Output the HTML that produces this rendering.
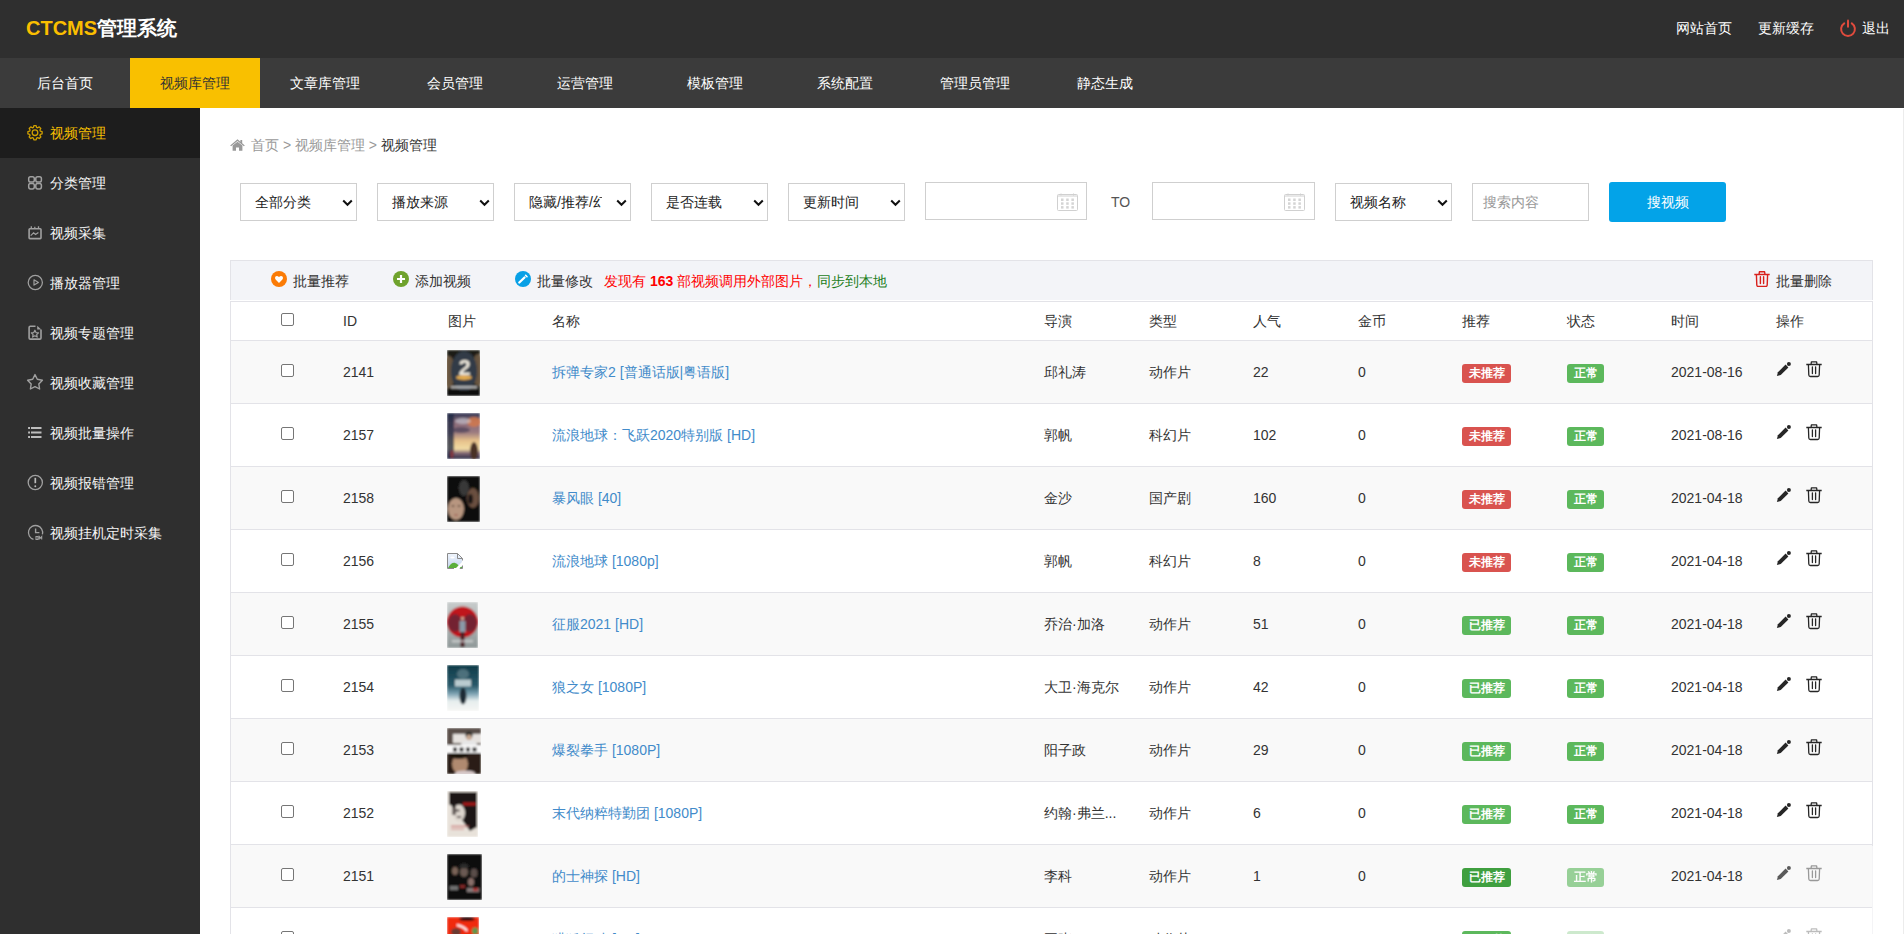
<!DOCTYPE html><html><head><meta charset="utf-8"><style>
*{margin:0;padding:0;box-sizing:border-box}
html,body{width:1904px;height:934px;overflow:hidden;background:#fff;font-family:"Liberation Sans",sans-serif;font-size:14px;color:#333}
.abs{position:absolute}
#hd{position:absolute;left:0;top:0;width:1904px;height:58px;background:#2f2f2f}
#logo{position:absolute;left:26px;top:15px;font-size:20px;font-weight:bold;line-height:26px;color:#fff}
#logo b{color:#fabe00}
.tl{position:absolute;top:19px;line-height:18px;color:#fff;font-size:14px;white-space:nowrap}
#nav{position:absolute;left:0;top:58px;width:1904px;height:50px;background:#3b3b3b}
#nav a{position:absolute;top:0;width:130px;height:50px;line-height:50px;text-align:center;color:#fff;text-decoration:none;font-size:14px}
#nav a.on{background:#f9c000;color:#333}
#side{position:absolute;left:0;top:108px;width:200px;height:826px;background:#2f2f2f}
#side .it{position:absolute;left:0;width:200px;height:50px;line-height:50px;color:#f6f6f6;font-size:14px}
#side .it.on{background:#1d1d1d;color:#f9c000}
#side .it span{position:absolute;left:50px;top:0}
#side .it svg{position:absolute;left:22px;top:12px}
.t{position:absolute;white-space:nowrap;line-height:18px}
.sel{position:absolute;top:183px;width:117px;height:38px;border:1px solid #cfcfcf;background:#fff;color:#222}
.sel span{position:absolute;left:14px;top:9px;line-height:18px}
.sel svg{position:absolute;left:101px;top:15px}
.inp{position:absolute;top:182px;height:38px;border:1px solid #cfcfcf;background:#fff}
#tb{position:absolute;left:230px;top:260px;width:1643px;height:40px;background:#f3f4f8;border-left:1px solid #e3e3e8;border-top:1px solid #e3e3e8;border-right:1px solid #e3e3e8}
.row{position:absolute;left:230px;width:1643px;height:63px;border-left:1px solid #e3e3e8;border-right:1px solid #e3e3e8;border-bottom:1px solid #e3e3e8}
.row .t{top:22px}
.cb{position:absolute;width:13px;height:13px;border:1px solid #767676;border-radius:2px;background:#fff}
.bd{position:absolute;height:19px;line-height:19px;border-radius:3px;color:#fff;font-size:12px;font-weight:bold;text-align:center}
.red{background:#d9534f}.grn{background:#5cb85c}
a.nm{color:#428bca;text-decoration:none}
</style></head><body>
<div id="hd">
<div id="logo"><b>CTCMS</b>管理系统</div>
<div class="tl" style="left:1676px">网站首页</div>
<div class="tl" style="left:1758px">更新缓存</div>
<svg class="abs" style="left:1839px;top:19px" width="18" height="18" viewBox="0 0 18 18"><path d="M5.2 4.3A6.9 6.9 0 1 0 12.8 4.3" fill="none" stroke="#e04b3d" stroke-width="2" stroke-linecap="round"/><path d="M9 1.6v6.2" stroke="#e04b3d" stroke-width="2" stroke-linecap="round"/></svg>
<div class="tl" style="left:1862px">退出</div>
</div>
<div id="nav">
<a style="left:0px">后台首页</a>
<a class="on" style="left:130px">视频库管理</a>
<a style="left:260px">文章库管理</a>
<a style="left:390px">会员管理</a>
<a style="left:520px">运营管理</a>
<a style="left:650px">模板管理</a>
<a style="left:780px">系统配置</a>
<a style="left:910px">管理员管理</a>
<a style="left:1040px">静态生成</a>
</div>
<div id="side">
<div class="it on" style="top:0px"><svg width="30" height="30" viewBox="0 0 30 30"><path d="M11.44 7.32 L11.87 5.59 L14.13 5.59 L14.56 7.32 L15.70 7.79 L17.23 6.88 L18.82 8.47 L17.91 10.00 L18.38 11.14 L20.11 11.57 L20.11 13.83 L18.38 14.26 L17.91 15.40 L18.82 16.93 L17.23 18.52 L15.70 17.61 L14.56 18.08 L14.13 19.81 L11.87 19.81 L11.44 18.08 L10.30 17.61 L8.77 18.52 L7.18 16.93 L8.09 15.40 L7.62 14.26 L5.89 13.83 L5.89 11.57 L7.62 11.14 L8.09 10.00 L7.18 8.47 L8.77 6.88 L10.30 7.79Z" fill="none" stroke="#cf9f00" stroke-width="1.3" stroke-linejoin="round"/><circle cx="13" cy="12.7" r="2.8" fill="none" stroke="#cf9f00" stroke-width="1.3"/></svg><span>视频管理</span></div>
<div class="it" style="top:50px"><svg width="30" height="30" viewBox="0 0 30 30"><rect x="6.7" y="6.7" width="5.6" height="5.3" rx="1.8" fill="none" stroke="#a0a0a0" stroke-width="1.5"/><rect x="13.8" y="6.7" width="5.6" height="5.3" rx="1.8" fill="none" stroke="#a0a0a0" stroke-width="1.5"/><rect x="6.7" y="13.5" width="5.6" height="5.4" rx="1.8" fill="none" stroke="#a0a0a0" stroke-width="1.5"/><rect x="13.8" y="13.5" width="5.6" height="5.4" rx="1.8" fill="none" stroke="#a0a0a0" stroke-width="1.5"/></svg><span>分类管理</span></div>
<div class="it" style="top:100px"><svg width="30" height="30" viewBox="0 0 30 30"><rect x="7.1" y="8.7" width="11.9" height="9.9" rx="0.8" fill="none" stroke="#a0a0a0" stroke-width="1.6"/><path d="M9.3 6.3v2.4M12.8 6.8v1.9M16.5 6.3v2.4" stroke="#a0a0a0" stroke-width="1.3"/><path d="M8.7 15.6L11.6 12.8L13.5 14.5L16.4 12.4" fill="none" stroke="#a0a0a0" stroke-width="1.2"/></svg><span>视频采集</span></div>
<div class="it" style="top:150px"><svg width="30" height="30" viewBox="0 0 30 30"><circle cx="13.3" cy="12.5" r="7.1" fill="none" stroke="#a0a0a0" stroke-width="1.25"/><path d="M12 9.8L16.4 12.5L12 15.1Z" fill="none" stroke="#a0a0a0" stroke-width="1.2" stroke-linejoin="round"/></svg><span>播放器管理</span></div>
<div class="it" style="top:200px"><svg width="30" height="30" viewBox="0 0 30 30"><path d="M13.5 6.3H8.3Q7.1 6.3 7.1 7.5V17.9Q7.1 19.1 8.3 19.1H17.8Q19 19.1 19 17.9V9.5" fill="none" stroke="#a0a0a0" stroke-width="1.6"/><path d="M15.2 5.8L19.2 9.6L15.2 9.6Z" fill="#a0a0a0"/><path d="M12.9 10.2L14 12.6L16.5 12.9L14.7 14.6L15.2 17.1L12.9 15.8L10.6 17.1L11.1 14.6L9.3 12.9L11.8 12.6Z" fill="none" stroke="#a0a0a0" stroke-width="1.2" stroke-linejoin="round"/></svg><span>视频专题管理</span></div>
<div class="it" style="top:250px"><svg width="30" height="30" viewBox="0 0 30 30"><path d="M13 4.6L15.3 9.3L20.4 10.2L16.8 13.9L17.6 19L13 16.6L8.4 19L9.2 13.9L5.6 10.2L10.7 9.3Z" fill="none" stroke="#a0a0a0" stroke-width="1.4" stroke-linejoin="round"/></svg><span>视频收藏管理</span></div>
<div class="it" style="top:300px"><svg width="30" height="30" viewBox="0 0 30 30"><path d="M6.1 8h1.9M6.1 12.5h1.9M6.1 16.9h1.9M9 8h10.5M9 12.5h10.5M9 16.9h10.5" stroke="#bdbdbd" stroke-width="2"/></svg><span>视频批量操作</span></div>
<div class="it" style="top:350px"><svg width="30" height="30" viewBox="0 0 30 30"><circle cx="13.3" cy="12.5" r="7.1" fill="none" stroke="#a0a0a0" stroke-width="1.3"/><path d="M13.3 7.8v5.4" stroke="#bbb" stroke-width="1.7"/><circle cx="13.3" cy="16.2" r="0.95" fill="#bbb"/></svg><span>视频报错管理</span></div>
<div class="it" style="top:400px"><svg width="30" height="30" viewBox="0 0 30 30"><path d="M11.5 19.4A7.1 7.1 0 1 1 20.4 14.4" fill="none" stroke="#a0a0a0" stroke-width="1.3"/><path d="M13.6 8.4V12.6H17.4" fill="none" stroke="#a0a0a0" stroke-width="1.4"/><path d="M14 16.5h2v3h-2zM17.3 19.6v-3l1.2 1.6l1.2-1.6v3" fill="none" stroke="#a0a0a0" stroke-width="1.1"/></svg><span>视频挂机定时采集</span></div>
</div>
<svg class="abs" style="left:230px;top:139px" width="15" height="12" viewBox="0 0 15 12"><path d="M7.5 0.3L0.2 6.4L1.1 7.3L7.5 2L13.9 7.3L14.8 6.4L12.2 4.3V1H10.4V2.8Z" fill="#999"/><path d="M2.6 6.6L7.5 2.7L12.4 6.6V11.8H9V8.4H6V11.8H2.6Z" fill="#999"/></svg>
<div class="t" style="left:251px;top:136px;font-size:14px;color:#999">首页 &gt; 视频库管理 &gt; <span style="color:#333">视频管理</span></div>
<div class="sel" style="left:240px"><span>全部分类</span><svg width="11" height="8" viewBox="0 0 11 8"><path d="M1.2 1.5L5.5 5.8L9.8 1.5" fill="none" stroke="#111" stroke-width="2"/></svg></div>
<div class="sel" style="left:377px"><span>播放来源</span><svg width="11" height="8" viewBox="0 0 11 8"><path d="M1.2 1.5L5.5 5.8L9.8 1.5" fill="none" stroke="#111" stroke-width="2"/></svg></div>
<div class="sel" style="left:514px"><span style="width:73px;overflow:hidden;white-space:nowrap">隐藏/推荐/幻灯</span><svg width="11" height="8" viewBox="0 0 11 8"><path d="M1.2 1.5L5.5 5.8L9.8 1.5" fill="none" stroke="#111" stroke-width="2"/></svg></div>
<div class="sel" style="left:651px"><span>是否连载</span><svg width="11" height="8" viewBox="0 0 11 8"><path d="M1.2 1.5L5.5 5.8L9.8 1.5" fill="none" stroke="#111" stroke-width="2"/></svg></div>
<div class="sel" style="left:788px"><span>更新时间</span><svg width="11" height="8" viewBox="0 0 11 8"><path d="M1.2 1.5L5.5 5.8L9.8 1.5" fill="none" stroke="#111" stroke-width="2"/></svg></div>
<div class="sel" style="left:1335px"><span>视频名称</span><svg width="11" height="8" viewBox="0 0 11 8"><path d="M1.2 1.5L5.5 5.8L9.8 1.5" fill="none" stroke="#111" stroke-width="2"/></svg></div>
<div class="inp" style="left:925px;width:162px"><svg class="abs" style="left:131px;top:10px" width="21" height="18" viewBox="0 0 21 18"><rect x="0.5" y="1.5" width="20" height="16" rx="1" fill="none" stroke="#d0d0d0" stroke-width="1"/><path d="M4 0.5v2M16.5 0.5v2" stroke="#d0d0d0"/><path d="M1 3h19" stroke="#d0d0d0" stroke-width="1"/><g fill="#d4d4d4"><rect x="4" y="5.5" width="2.5" height="2.5"/><rect x="9.2" y="5.5" width="2.5" height="2.5"/><rect x="14.4" y="5.5" width="2.5" height="2.5"/><rect x="4" y="9.3" width="2.5" height="2.5"/><rect x="9.2" y="9.3" width="2.5" height="2.5"/><rect x="14.4" y="9.3" width="2.5" height="2.5"/><rect x="4" y="13.1" width="2.5" height="2.5"/><rect x="9.2" y="13.1" width="2.5" height="2.5"/><rect x="14.4" y="13.1" width="2.5" height="2.5"/></g></svg></div>
<div class="t" style="left:1111px;top:193px;color:#555">TO</div>
<div class="inp" style="left:1152px;width:163px"><svg class="abs" style="left:131px;top:10px" width="21" height="18" viewBox="0 0 21 18"><rect x="0.5" y="1.5" width="20" height="16" rx="1" fill="none" stroke="#d0d0d0" stroke-width="1"/><path d="M4 0.5v2M16.5 0.5v2" stroke="#d0d0d0"/><path d="M1 3h19" stroke="#d0d0d0" stroke-width="1"/><g fill="#d4d4d4"><rect x="4" y="5.5" width="2.5" height="2.5"/><rect x="9.2" y="5.5" width="2.5" height="2.5"/><rect x="14.4" y="5.5" width="2.5" height="2.5"/><rect x="4" y="9.3" width="2.5" height="2.5"/><rect x="9.2" y="9.3" width="2.5" height="2.5"/><rect x="14.4" y="9.3" width="2.5" height="2.5"/><rect x="4" y="13.1" width="2.5" height="2.5"/><rect x="9.2" y="13.1" width="2.5" height="2.5"/><rect x="14.4" y="13.1" width="2.5" height="2.5"/></g></svg></div>
<div class="inp" style="left:1472px;top:183px;width:117px"><span class="t" style="left:10px;top:9px;color:#999;font-size:14px">搜索内容</span></div>
<div class="abs" style="left:1609px;top:182px;width:117px;height:40px;background:#03a3e8;border-radius:3px;color:#fff;text-align:center;line-height:40px">搜视频</div>
<div id="tb"></div>
<svg class="abs" style="left:271px;top:271px" width="16" height="16" viewBox="0 0 16 16"><circle cx="8" cy="8" r="8" fill="#fb7b06"/><path d="M8 12L4.6 8.4Q3.4 6.9 4.5 5.5Q6 4.2 8 6Q10 4.2 11.5 5.5Q12.6 6.9 11.4 8.4Z" fill="#fff"/></svg>
<div class="t" style="left:293px;top:272px">批量推荐</div>
<svg class="abs" style="left:393px;top:271px" width="16" height="16" viewBox="0 0 16 16"><circle cx="8" cy="8" r="8" fill="#6fa22d"/><path d="M8 4v8M4 8h8" stroke="#fff" stroke-width="2.2"/></svg>
<div class="t" style="left:415px;top:272px">添加视频</div>
<svg class="abs" style="left:515px;top:271px" width="16" height="16" viewBox="0 0 16 16"><circle cx="8" cy="8" r="8" fill="#08a0e6"/><path d="M4.3 11.5L9.5 6.5" stroke="#fff" stroke-width="2.3" stroke-linecap="round"/><path d="M10.6 4.3L12 5.7" stroke="#fff" stroke-width="1.6" stroke-linecap="round"/></svg>
<div class="t" style="left:537px;top:272px">批量修改</div>
<div class="t" style="left:604px;top:272px;color:#f00">发现有 <b>163</b> 部视频调用外部图片，<span style="color:#1b7d1b">同步到本地</span></div>
<svg class="abs" style="left:1754px;top:271px" width="16" height="16" viewBox="0 0 16 16"><path d="M0.3 3.5H15.7M5 3.5L5.4 0.8H10.6L11 3.5M2.4 3.5L2.8 14Q2.9 15.5 4.4 15.5H11.6Q13.1 15.5 13.2 14L13.6 3.5" fill="none" stroke="#d8201c" stroke-width="1.4" stroke-linejoin="round"/><path d="M6.4 5.8v6.8M9.6 5.8v6.8" stroke="#d8201c" stroke-width="1.4" stroke-linecap="round"/></svg>
<div class="t" style="left:1776px;top:272px">批量删除</div>
<div class="row" style="top:301px;height:40px;border-top:1px solid #e3e3e8;background:#fff"></div>
<div class="cb" style="left:281px;top:313px"></div>
<div class="t" style="left:343px;top:312px">ID</div>
<div class="t" style="left:448px;top:312px">图片</div>
<div class="t" style="left:552px;top:312px">名称</div>
<div class="t" style="left:1044px;top:312px">导演</div>
<div class="t" style="left:1149px;top:312px">类型</div>
<div class="t" style="left:1253px;top:312px">人气</div>
<div class="t" style="left:1358px;top:312px">金币</div>
<div class="t" style="left:1462px;top:312px">推荐</div>
<div class="t" style="left:1567px;top:312px">状态</div>
<div class="t" style="left:1671px;top:312px">时间</div>
<div class="t" style="left:1776px;top:312px">操作</div>
<div class="row" style="top:341px;height:63px;background:#f9f9f9"></div>
<div class="cb" style="left:281px;top:364px"></div>
<div class="t" style="left:343px;top:363px">2141</div>
<svg class="abs" style="left:447px;top:350px" width="33" height="46" viewBox="0 0 33 46"><defs><filter id="b0" x="-10%" y="-10%" width="120%" height="120%"><feGaussianBlur stdDeviation="1.1"/></filter></defs><g filter="url(#b0)"><rect width="33" height="46" fill="#1f1c19"/><ellipse cx="2" cy="22" rx="6" ry="16" fill="#7a6448" opacity=".8"/><ellipse cx="31" cy="20" rx="6" ry="16" fill="#7a6448" opacity=".8"/><ellipse cx="17" cy="21" rx="13" ry="20" fill="#303b46"/><ellipse cx="17" cy="27.5" rx="8" ry="2.5" fill="#e2aa50"/><text x="17.5" y="25" font-size="22" font-weight="bold" text-anchor="middle" fill="#ebe6da" font-family="Liberation Sans">2</text><rect x="4" y="36" width="26" height="2.5" fill="#d0d0d0" opacity=".8"/><rect y="40" width="33" height="6" fill="#111"/></g></svg>
<div class="t" style="left:552px;top:363px"><a class="nm">拆弹专家2 [普通话版|粤语版]</a></div>
<div class="t" style="left:1044px;top:363px">邱礼涛</div>
<div class="t" style="left:1149px;top:363px">动作片</div>
<div class="t" style="left:1253px;top:363px">22</div>
<div class="t" style="left:1358px;top:363px">0</div>
<div class="bd red" style="left:1462px;top:364px;width:49px">未推荐</div>
<div class="bd grn" style="left:1567px;top:364px;width:37px;">正常</div>
<div class="t" style="left:1671px;top:363px">2021-08-16</div>
<svg class="abs" style="left:1776px;top:361px;opacity:1" width="16" height="16" viewBox="0 0 16 16"><path d="M0.9 15.1L1.9 11.3L9.6 3.6L12.4 6.4L4.7 14.1Z" fill="#262626"/><circle cx="12.9" cy="3.1" r="2" fill="#262626"/></svg>
<svg class="abs" style="left:1806px;top:361px;opacity:1" width="16" height="17" viewBox="0 0 16 17"><path d="M0.3 3.5H15.7M5 3.5L5.4 0.8H10.6L11 3.5M2.4 3.5L2.8 14Q2.9 15.5 4.4 15.5H11.6Q13.1 15.5 13.2 14L13.6 3.5" fill="none" stroke="#262626" stroke-width="1.3" stroke-linejoin="round"/><path d="M6.4 5.8v6.8M9.6 5.8v6.8" stroke="#262626" stroke-width="1.3" stroke-linecap="round"/></svg>
<div class="row" style="top:404px;height:63px;background:#fff"></div>
<div class="cb" style="left:281px;top:427px"></div>
<div class="t" style="left:343px;top:426px">2157</div>
<svg class="abs" style="left:447px;top:413px" width="33" height="46" viewBox="0 0 33 46"><defs><filter id="b1" x="-10%" y="-10%" width="120%" height="120%"><feGaussianBlur stdDeviation="1.1"/></filter></defs><g filter="url(#b1)"><defs><linearGradient id="g2" x1="0" y1="0" x2="0" y2="1"><stop offset="0" stop-color="#2d3450"/><stop offset=".2" stop-color="#8a6a78"/><stop offset=".42" stop-color="#9a7a80"/><stop offset=".6" stop-color="#e6c08a"/><stop offset=".78" stop-color="#f2dca4"/><stop offset=".88" stop-color="#7a6070"/><stop offset="1" stop-color="#2e3048"/></linearGradient></defs><rect width="33" height="46" fill="url(#g2)"/><rect width="7" height="46" fill="#1c2742" opacity=".75"/><ellipse cx="27" cy="9" rx="7" ry="5" fill="#d87a4a" opacity=".8"/><ellipse cx="16" cy="8" rx="8" ry="3" fill="#d0d0d8" opacity=".6"/><ellipse cx="14" cy="17" rx="9" ry="3" fill="#4a4058" opacity=".7"/><ellipse cx="27" cy="38" rx="4" ry="9" fill="#4a3028"/><ellipse cx="5" cy="41" rx="1.6" ry="4" fill="#8a3a40"/></g></svg>
<div class="t" style="left:552px;top:426px"><a class="nm">流浪地球：飞跃2020特别版 [HD]</a></div>
<div class="t" style="left:1044px;top:426px">郭帆</div>
<div class="t" style="left:1149px;top:426px">科幻片</div>
<div class="t" style="left:1253px;top:426px">102</div>
<div class="t" style="left:1358px;top:426px">0</div>
<div class="bd red" style="left:1462px;top:427px;width:49px">未推荐</div>
<div class="bd grn" style="left:1567px;top:427px;width:37px;">正常</div>
<div class="t" style="left:1671px;top:426px">2021-08-16</div>
<svg class="abs" style="left:1776px;top:424px;opacity:1" width="16" height="16" viewBox="0 0 16 16"><path d="M0.9 15.1L1.9 11.3L9.6 3.6L12.4 6.4L4.7 14.1Z" fill="#262626"/><circle cx="12.9" cy="3.1" r="2" fill="#262626"/></svg>
<svg class="abs" style="left:1806px;top:424px;opacity:1" width="16" height="17" viewBox="0 0 16 17"><path d="M0.3 3.5H15.7M5 3.5L5.4 0.8H10.6L11 3.5M2.4 3.5L2.8 14Q2.9 15.5 4.4 15.5H11.6Q13.1 15.5 13.2 14L13.6 3.5" fill="none" stroke="#262626" stroke-width="1.3" stroke-linejoin="round"/><path d="M6.4 5.8v6.8M9.6 5.8v6.8" stroke="#262626" stroke-width="1.3" stroke-linecap="round"/></svg>
<div class="row" style="top:467px;height:63px;background:#f9f9f9"></div>
<div class="cb" style="left:281px;top:490px"></div>
<div class="t" style="left:343px;top:489px">2158</div>
<svg class="abs" style="left:447px;top:476px" width="33" height="46" viewBox="0 0 33 46"><defs><filter id="b2" x="-10%" y="-10%" width="120%" height="120%"><feGaussianBlur stdDeviation="1.1"/></filter></defs><g filter="url(#b2)"><rect width="33" height="46" fill="#0e0d0c"/><ellipse cx="17" cy="12" rx="5" ry="8" fill="#4a4a4a" opacity=".7"/><ellipse cx="26" cy="22" rx="6" ry="10" fill="#6a5040"/><ellipse cx="23.5" cy="23" rx="2.5" ry="5" fill="#1a1512"/><ellipse cx="9" cy="33" rx="8" ry="11" fill="#b89680"/><ellipse cx="6" cy="30" rx="1.5" ry=".7" fill="#4a3a30"/><ellipse cx="12" cy="30" rx="1.5" ry=".7" fill="#4a3a30"/><ellipse cx="9" cy="39" rx="2" ry=".8" fill="#9a5a50"/></g></svg>
<div class="t" style="left:552px;top:489px"><a class="nm">暴风眼 [40]</a></div>
<div class="t" style="left:1044px;top:489px">金沙</div>
<div class="t" style="left:1149px;top:489px">国产剧</div>
<div class="t" style="left:1253px;top:489px">160</div>
<div class="t" style="left:1358px;top:489px">0</div>
<div class="bd red" style="left:1462px;top:490px;width:49px">未推荐</div>
<div class="bd grn" style="left:1567px;top:490px;width:37px;">正常</div>
<div class="t" style="left:1671px;top:489px">2021-04-18</div>
<svg class="abs" style="left:1776px;top:487px;opacity:1" width="16" height="16" viewBox="0 0 16 16"><path d="M0.9 15.1L1.9 11.3L9.6 3.6L12.4 6.4L4.7 14.1Z" fill="#262626"/><circle cx="12.9" cy="3.1" r="2" fill="#262626"/></svg>
<svg class="abs" style="left:1806px;top:487px;opacity:1" width="16" height="17" viewBox="0 0 16 17"><path d="M0.3 3.5H15.7M5 3.5L5.4 0.8H10.6L11 3.5M2.4 3.5L2.8 14Q2.9 15.5 4.4 15.5H11.6Q13.1 15.5 13.2 14L13.6 3.5" fill="none" stroke="#262626" stroke-width="1.3" stroke-linejoin="round"/><path d="M6.4 5.8v6.8M9.6 5.8v6.8" stroke="#262626" stroke-width="1.3" stroke-linecap="round"/></svg>
<div class="row" style="top:530px;height:63px;background:#fff"></div>
<div class="cb" style="left:281px;top:553px"></div>
<div class="t" style="left:343px;top:552px">2156</div>
<svg class="abs" style="left:447px;top:553px" width="16" height="16" viewBox="0 0 16 16"><defs><linearGradient id="bi" x1="0" y1="0" x2="0" y2="1"><stop offset="0" stop-color="#eef4fc"/><stop offset="1" stop-color="#c4d4ee"/></linearGradient></defs><path d="M1 1H10.5L15 5.5V15H1Z" fill="url(#bi)"/><ellipse cx="5.5" cy="4.5" rx="2.2" ry="1" fill="#fff"/><path d="M1 15Q4 9.5 7.5 9.8Q10 10 12 13L12 15Z" fill="#5aae3a"/><path d="M0.5 15.5V0.5H10.5L15.5 5.5V7.5M15.5 11.5V15.5H12.5M7 15.5H0.5" fill="none" stroke="#8a8a8a" stroke-width="1"/><path d="M10.5 0.5V5.5H15.5" fill="none" stroke="#8a8a8a"/><path d="M7.5 16.5L17 7L17 11L11.5 16.5Z" fill="#fff"/><path d="M12.8 15Q14 13 15 14V15Z" fill="#5aae3a"/></svg>
<div class="t" style="left:552px;top:552px"><a class="nm">流浪地球 [1080p]</a></div>
<div class="t" style="left:1044px;top:552px">郭帆</div>
<div class="t" style="left:1149px;top:552px">科幻片</div>
<div class="t" style="left:1253px;top:552px">8</div>
<div class="t" style="left:1358px;top:552px">0</div>
<div class="bd red" style="left:1462px;top:553px;width:49px">未推荐</div>
<div class="bd grn" style="left:1567px;top:553px;width:37px;">正常</div>
<div class="t" style="left:1671px;top:552px">2021-04-18</div>
<svg class="abs" style="left:1776px;top:550px;opacity:1" width="16" height="16" viewBox="0 0 16 16"><path d="M0.9 15.1L1.9 11.3L9.6 3.6L12.4 6.4L4.7 14.1Z" fill="#262626"/><circle cx="12.9" cy="3.1" r="2" fill="#262626"/></svg>
<svg class="abs" style="left:1806px;top:550px;opacity:1" width="16" height="17" viewBox="0 0 16 17"><path d="M0.3 3.5H15.7M5 3.5L5.4 0.8H10.6L11 3.5M2.4 3.5L2.8 14Q2.9 15.5 4.4 15.5H11.6Q13.1 15.5 13.2 14L13.6 3.5" fill="none" stroke="#262626" stroke-width="1.3" stroke-linejoin="round"/><path d="M6.4 5.8v6.8M9.6 5.8v6.8" stroke="#262626" stroke-width="1.3" stroke-linecap="round"/></svg>
<div class="row" style="top:593px;height:63px;background:#f9f9f9"></div>
<div class="cb" style="left:281px;top:616px"></div>
<div class="t" style="left:343px;top:615px">2155</div>
<svg class="abs" style="left:447px;top:602px" width="31" height="46" viewBox="0 0 31 46"><defs><filter id="b4" x="-10%" y="-10%" width="120%" height="120%"><feGaussianBlur stdDeviation="1.1"/></filter></defs><g filter="url(#b4)"><defs><linearGradient id="g5" x1="0" y1="0" x2="0" y2="1"><stop offset="0" stop-color="#c8cccc"/><stop offset="1" stop-color="#8f9898"/></linearGradient></defs><rect width="31" height="46" fill="url(#g5)"/><circle cx="15.5" cy="20" r="15.5" fill="#c0121c"/><ellipse cx="8" cy="21" rx="7" ry="9" fill="#5a2a38" opacity=".75"/><ellipse cx="23" cy="21" rx="7" ry="9" fill="#5a2a38" opacity=".75"/><circle cx="15.5" cy="16.5" r="1.8" fill="#c8a090"/><rect x="12.5" y="19" width="6" height="11" fill="#8a9aa8"/><rect x="13.5" y="30" width="4" height="15" fill="#4a1a22"/><rect x="5" y="38" width="21" height="2.5" fill="#e0e0e0" opacity=".6"/></g></svg>
<div class="t" style="left:552px;top:615px"><a class="nm">征服2021 [HD]</a></div>
<div class="t" style="left:1044px;top:615px">乔治·加洛</div>
<div class="t" style="left:1149px;top:615px">动作片</div>
<div class="t" style="left:1253px;top:615px">51</div>
<div class="t" style="left:1358px;top:615px">0</div>
<div class="bd grn" style="left:1462px;top:616px;width:49px;">已推荐</div>
<div class="bd grn" style="left:1567px;top:616px;width:37px;">正常</div>
<div class="t" style="left:1671px;top:615px">2021-04-18</div>
<svg class="abs" style="left:1776px;top:613px;opacity:1" width="16" height="16" viewBox="0 0 16 16"><path d="M0.9 15.1L1.9 11.3L9.6 3.6L12.4 6.4L4.7 14.1Z" fill="#262626"/><circle cx="12.9" cy="3.1" r="2" fill="#262626"/></svg>
<svg class="abs" style="left:1806px;top:613px;opacity:1" width="16" height="17" viewBox="0 0 16 17"><path d="M0.3 3.5H15.7M5 3.5L5.4 0.8H10.6L11 3.5M2.4 3.5L2.8 14Q2.9 15.5 4.4 15.5H11.6Q13.1 15.5 13.2 14L13.6 3.5" fill="none" stroke="#262626" stroke-width="1.3" stroke-linejoin="round"/><path d="M6.4 5.8v6.8M9.6 5.8v6.8" stroke="#262626" stroke-width="1.3" stroke-linecap="round"/></svg>
<div class="row" style="top:656px;height:63px;background:#fff"></div>
<div class="cb" style="left:281px;top:679px"></div>
<div class="t" style="left:343px;top:678px">2154</div>
<svg class="abs" style="left:447px;top:665px" width="32" height="46" viewBox="0 0 32 46"><defs><filter id="b5" x="-10%" y="-10%" width="120%" height="120%"><feGaussianBlur stdDeviation="1.1"/></filter></defs><g filter="url(#b5)"><defs><linearGradient id="g6" x1="0" y1="0" x2="0" y2="1"><stop offset="0" stop-color="#0e3a48"/><stop offset=".45" stop-color="#2a5a6a"/><stop offset=".62" stop-color="#7aa0b0"/><stop offset=".78" stop-color="#e6eeee"/><stop offset="1" stop-color="#f6f6f4"/></linearGradient></defs><rect width="32" height="46" fill="url(#g6)"/><ellipse cx="16" cy="9" rx="6" ry="5" fill="#5a7a85" opacity=".8"/><rect x="8" y="14.5" width="16" height="7" fill="#dfe8ea" opacity=".8"/><ellipse cx="16" cy="31" rx="3.5" ry="8.5" fill="#1a2a35"/></g></svg>
<div class="t" style="left:552px;top:678px"><a class="nm">狼之女 [1080P]</a></div>
<div class="t" style="left:1044px;top:678px">大卫·海克尔</div>
<div class="t" style="left:1149px;top:678px">动作片</div>
<div class="t" style="left:1253px;top:678px">42</div>
<div class="t" style="left:1358px;top:678px">0</div>
<div class="bd grn" style="left:1462px;top:679px;width:49px;">已推荐</div>
<div class="bd grn" style="left:1567px;top:679px;width:37px;">正常</div>
<div class="t" style="left:1671px;top:678px">2021-04-18</div>
<svg class="abs" style="left:1776px;top:676px;opacity:1" width="16" height="16" viewBox="0 0 16 16"><path d="M0.9 15.1L1.9 11.3L9.6 3.6L12.4 6.4L4.7 14.1Z" fill="#262626"/><circle cx="12.9" cy="3.1" r="2" fill="#262626"/></svg>
<svg class="abs" style="left:1806px;top:676px;opacity:1" width="16" height="17" viewBox="0 0 16 17"><path d="M0.3 3.5H15.7M5 3.5L5.4 0.8H10.6L11 3.5M2.4 3.5L2.8 14Q2.9 15.5 4.4 15.5H11.6Q13.1 15.5 13.2 14L13.6 3.5" fill="none" stroke="#262626" stroke-width="1.3" stroke-linejoin="round"/><path d="M6.4 5.8v6.8M9.6 5.8v6.8" stroke="#262626" stroke-width="1.3" stroke-linecap="round"/></svg>
<div class="row" style="top:719px;height:63px;background:#f9f9f9"></div>
<div class="cb" style="left:281px;top:742px"></div>
<div class="t" style="left:343px;top:741px">2153</div>
<svg class="abs" style="left:447px;top:728px" width="34" height="46" viewBox="0 0 34 46"><defs><filter id="b6" x="-10%" y="-10%" width="120%" height="120%"><feGaussianBlur stdDeviation="1.1"/></filter></defs><g filter="url(#b6)"><rect width="34" height="17" fill="#5a5048"/><rect x="6" y="6" width="28" height="9" fill="#e6e2de"/><circle cx="22" cy="7" r="3.5" fill="#2a2a28"/><ellipse cx="22" cy="9.5" rx="2.6" ry="3" fill="#c8a890"/><ellipse cx="22" cy="16" rx="8" ry="4" fill="#e6e6e6"/><rect y="17" width="34" height="8" fill="#fbfbfb"/><g fill="#222"><rect x="6" y="19.5" width="4" height="4"/><rect x="12.5" y="19.5" width="4" height="4"/><rect x="19" y="19.5" width="4" height="4"/><rect x="25.5" y="19.5" width="4" height="4"/></g><rect y="25" width="34" height="21" fill="#2a1e18"/><ellipse cx="13" cy="36" rx="8" ry="9.5" fill="#b08a70"/><ellipse cx="12" cy="28" rx="9" ry="3" fill="#1a1410"/><ellipse cx="18" cy="45" rx="10" ry="2.5" fill="#d6c8c8"/></g></svg>
<div class="t" style="left:552px;top:741px"><a class="nm">爆裂拳手 [1080P]</a></div>
<div class="t" style="left:1044px;top:741px">阳子政</div>
<div class="t" style="left:1149px;top:741px">动作片</div>
<div class="t" style="left:1253px;top:741px">29</div>
<div class="t" style="left:1358px;top:741px">0</div>
<div class="bd grn" style="left:1462px;top:742px;width:49px;">已推荐</div>
<div class="bd grn" style="left:1567px;top:742px;width:37px;">正常</div>
<div class="t" style="left:1671px;top:741px">2021-04-18</div>
<svg class="abs" style="left:1776px;top:739px;opacity:1" width="16" height="16" viewBox="0 0 16 16"><path d="M0.9 15.1L1.9 11.3L9.6 3.6L12.4 6.4L4.7 14.1Z" fill="#262626"/><circle cx="12.9" cy="3.1" r="2" fill="#262626"/></svg>
<svg class="abs" style="left:1806px;top:739px;opacity:1" width="16" height="17" viewBox="0 0 16 17"><path d="M0.3 3.5H15.7M5 3.5L5.4 0.8H10.6L11 3.5M2.4 3.5L2.8 14Q2.9 15.5 4.4 15.5H11.6Q13.1 15.5 13.2 14L13.6 3.5" fill="none" stroke="#262626" stroke-width="1.3" stroke-linejoin="round"/><path d="M6.4 5.8v6.8M9.6 5.8v6.8" stroke="#262626" stroke-width="1.3" stroke-linecap="round"/></svg>
<div class="row" style="top:782px;height:63px;background:#fff"></div>
<div class="cb" style="left:281px;top:805px"></div>
<div class="t" style="left:343px;top:804px">2152</div>
<svg class="abs" style="left:447px;top:791px" width="31" height="46" viewBox="0 0 31 46"><defs><filter id="b7" x="-10%" y="-10%" width="120%" height="120%"><feGaussianBlur stdDeviation="1.1"/></filter></defs><g filter="url(#b7)"><rect width="31" height="46" fill="#e8e2da"/><path d="M2 1H30V36L23 40L15 29L6 16L2 13Z" fill="#1a1515"/><ellipse cx="12" cy="22" rx="6" ry="8.5" fill="#ddd6ce"/><ellipse cx="10" cy="19.5" rx="3" ry="1" fill="#3a3232"/><ellipse cx="12" cy="26" rx="2.5" ry="1" fill="#5a4a4a"/><rect x="16" y="11.5" width="13" height="3" fill="#a81818"/><rect x="5" y="14" width="4" height="10" fill="#2a2020" opacity=".6"/><rect x="4" y="34.5" width="18" height="1.6" fill="#c86a6a" opacity=".7"/><rect x="4" y="37.5" width="13" height="1.2" fill="#c86a6a" opacity=".6"/></g></svg>
<div class="t" style="left:552px;top:804px"><a class="nm">末代纳粹特勤团 [1080P]</a></div>
<div class="t" style="left:1044px;top:804px">约翰·弗兰...</div>
<div class="t" style="left:1149px;top:804px">动作片</div>
<div class="t" style="left:1253px;top:804px">6</div>
<div class="t" style="left:1358px;top:804px">0</div>
<div class="bd grn" style="left:1462px;top:805px;width:49px;">已推荐</div>
<div class="bd grn" style="left:1567px;top:805px;width:37px;">正常</div>
<div class="t" style="left:1671px;top:804px">2021-04-18</div>
<svg class="abs" style="left:1776px;top:802px;opacity:1" width="16" height="16" viewBox="0 0 16 16"><path d="M0.9 15.1L1.9 11.3L9.6 3.6L12.4 6.4L4.7 14.1Z" fill="#262626"/><circle cx="12.9" cy="3.1" r="2" fill="#262626"/></svg>
<svg class="abs" style="left:1806px;top:802px;opacity:1" width="16" height="17" viewBox="0 0 16 17"><path d="M0.3 3.5H15.7M5 3.5L5.4 0.8H10.6L11 3.5M2.4 3.5L2.8 14Q2.9 15.5 4.4 15.5H11.6Q13.1 15.5 13.2 14L13.6 3.5" fill="none" stroke="#262626" stroke-width="1.3" stroke-linejoin="round"/><path d="M6.4 5.8v6.8M9.6 5.8v6.8" stroke="#262626" stroke-width="1.3" stroke-linecap="round"/></svg>
<div class="row" style="top:845px;height:63px;background:#f9f9f9"></div>
<div class="cb" style="left:281px;top:868px"></div>
<div class="t" style="left:343px;top:867px">2151</div>
<svg class="abs" style="left:447px;top:854px" width="35" height="46" viewBox="0 0 35 46"><defs><filter id="b8" x="-10%" y="-10%" width="120%" height="120%"><feGaussianBlur stdDeviation="1.1"/></filter></defs><g filter="url(#b8)"><rect width="35" height="46" fill="#0d0d0d"/><ellipse cx="8" cy="17" rx="3" ry="4" fill="#7a6458"/><ellipse cx="17" cy="18" rx="4" ry="5" fill="#6a5a52"/><ellipse cx="17" cy="12" rx="4.5" ry="2.5" fill="#2a2a2a"/><ellipse cx="27" cy="19" rx="3.5" ry="4.5" fill="#5a4e48"/><ellipse cx="24" cy="28" rx="3" ry="4" fill="#8a706a"/><rect x="3" y="32" width="8" height="4" fill="#9a9a9a" opacity=".7"/><rect x="13" y="31" width="5" height="3" fill="#a03030" opacity=".8"/><rect x="20" y="34" width="12" height="4" fill="#b8a8a8" opacity=".7"/><rect x="26" y="34" width="5" height="3" fill="#b02020" opacity=".8"/></g></svg>
<div class="t" style="left:552px;top:867px"><a class="nm">的士神探 [HD]</a></div>
<div class="t" style="left:1044px;top:867px">李科</div>
<div class="t" style="left:1149px;top:867px">动作片</div>
<div class="t" style="left:1253px;top:867px">1</div>
<div class="t" style="left:1358px;top:867px">0</div>
<div class="bd grn" style="left:1462px;top:868px;width:49px;background:#3f9f3f">已推荐</div>
<div class="bd grn" style="left:1567px;top:868px;width:37px;opacity:.62;">正常</div>
<div class="t" style="left:1671px;top:867px">2021-04-18</div>
<svg class="abs" style="left:1776px;top:865px;opacity:.75" width="16" height="16" viewBox="0 0 16 16"><path d="M0.9 15.1L1.9 11.3L9.6 3.6L12.4 6.4L4.7 14.1Z" fill="#262626"/><circle cx="12.9" cy="3.1" r="2" fill="#262626"/></svg>
<svg class="abs" style="left:1806px;top:865px;opacity:.45" width="16" height="17" viewBox="0 0 16 17"><path d="M0.3 3.5H15.7M5 3.5L5.4 0.8H10.6L11 3.5M2.4 3.5L2.8 14Q2.9 15.5 4.4 15.5H11.6Q13.1 15.5 13.2 14L13.6 3.5" fill="none" stroke="#262626" stroke-width="1.3" stroke-linejoin="round"/><path d="M6.4 5.8v6.8M9.6 5.8v6.8" stroke="#262626" stroke-width="1.3" stroke-linecap="round"/></svg>
<div class="row" style="top:908px;height:63px;background:#fff"></div>
<div class="cb" style="left:281px;top:931px"></div>
<div class="t" style="left:343px;top:930px">2150</div>
<svg class="abs" style="left:447px;top:917px" width="32" height="46" viewBox="0 0 32 46"><defs><filter id="b9" x="-10%" y="-10%" width="120%" height="120%"><feGaussianBlur stdDeviation="1.1"/></filter></defs><g filter="url(#b9)"><rect width="32" height="46" fill="#f02a0c"/><ellipse cx="20" cy="2" rx="8" ry="2" fill="#2a0a08"/><path d="M10 8Q18 10 20 14" stroke="#fff" stroke-width="2" fill="none"/><ellipse cx="28" cy="14" rx="3" ry="3.5" fill="#5a9a50"/><ellipse cx="9" cy="15" rx="5" ry="4" fill="#6a3a30"/></g></svg>
<div class="t" style="left:552px;top:930px"><a class="nm">猎狐行动 [HD]</a></div>
<div class="t" style="left:1044px;top:930px">王晓</div>
<div class="t" style="left:1149px;top:930px">动作片</div>
<div class="t" style="left:1253px;top:930px">3</div>
<div class="t" style="left:1358px;top:930px">0</div>
<div class="bd grn" style="left:1462px;top:931px;width:49px;">已推荐</div>
<div class="bd grn" style="left:1567px;top:931px;width:37px;opacity:.3;">正常</div>
<div class="t" style="left:1671px;top:930px">2021-04-18</div>
<svg class="abs" style="left:1776px;top:928px;opacity:.3" width="16" height="16" viewBox="0 0 16 16"><path d="M0.9 15.1L1.9 11.3L9.6 3.6L12.4 6.4L4.7 14.1Z" fill="#262626"/><circle cx="12.9" cy="3.1" r="2" fill="#262626"/></svg>
<svg class="abs" style="left:1806px;top:928px;opacity:.3" width="16" height="17" viewBox="0 0 16 17"><path d="M0.3 3.5H15.7M5 3.5L5.4 0.8H10.6L11 3.5M2.4 3.5L2.8 14Q2.9 15.5 4.4 15.5H11.6Q13.1 15.5 13.2 14L13.6 3.5" fill="none" stroke="#262626" stroke-width="1.3" stroke-linejoin="round"/><path d="M6.4 5.8v6.8M9.6 5.8v6.8" stroke="#262626" stroke-width="1.3" stroke-linecap="round"/></svg>
<div class="abs" style="left:1872px;top:846px;width:1px;height:88px;background:#f4f4f6"></div>
<div class="abs" style="left:1903px;top:109px;width:1px;height:825px;background:#ececec"></div></body></html>
